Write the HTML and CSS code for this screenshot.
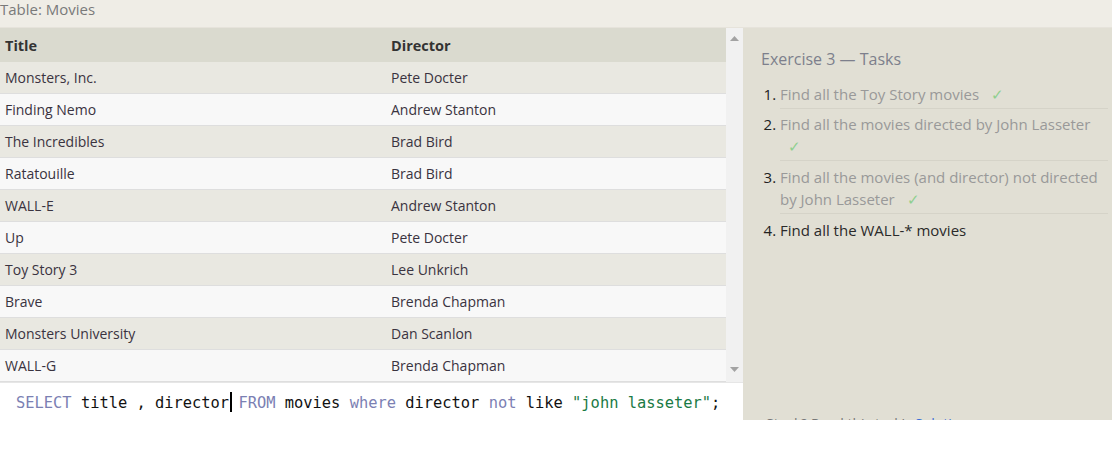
FILE: index.html
```html
<!DOCTYPE html>
<html>
<head>
<meta charset="utf-8">
<link rel="stylesheet" href="styles.css">
</head>
<body>
<div class="topbar">Table: Movies</div>
<div class="main">
  <div class="left">
    <div class="tablewrap">
      <div class="table">
        <div class="row head"><div class="c1">Title</div><div class="c2">Director</div></div>
        <div class="row odd"><div class="c1">Monsters, Inc.</div><div class="c2">Pete Docter</div></div>
        <div class="row even"><div class="c1">Finding Nemo</div><div class="c2">Andrew Stanton</div></div>
        <div class="row odd"><div class="c1">The Incredibles</div><div class="c2">Brad Bird</div></div>
        <div class="row even"><div class="c1">Ratatouille</div><div class="c2">Brad Bird</div></div>
        <div class="row odd"><div class="c1">WALL-E</div><div class="c2">Andrew Stanton</div></div>
        <div class="row even"><div class="c1">Up</div><div class="c2">Pete Docter</div></div>
        <div class="row odd"><div class="c1">Toy Story 3</div><div class="c2">Lee Unkrich</div></div>
        <div class="row even"><div class="c1">Brave</div><div class="c2">Brenda Chapman</div></div>
        <div class="row odd"><div class="c1">Monsters University</div><div class="c2">Dan Scanlon</div></div>
        <div class="row even"><div class="c1">WALL-G</div><div class="c2">Brenda Chapman</div></div>
      </div>
      <div class="scrollbar">
        <svg class="arrow" width="9" height="5" viewBox="0 0 9 5"><polygon points="0,5 9,5 4.5,0" fill="#a3a3a3"/></svg>
        <svg class="arrow" width="9" height="5" viewBox="0 0 9 5"><polygon points="0,0 9,0 4.5,5" fill="#a3a3a3"/></svg>
      </div>
    </div>
    <div class="editor"><span class="kw">SELECT</span> title , director<span class="cursor"></span> <span class="kw">FROM</span> movies <span class="kw">where</span> director <span class="kw">not</span> like <span class="str">"john lasseter"</span>;</div>
  </div>
  <div class="panel">
    <div class="ptitle">Exercise 3 — Tasks</div>
    <ol class="tasks">
      <li class="done">Find all the Toy Story movies <span class="check">✓</span></li>
      <li class="done">Find all the movies directed by John Lasseter <span class="check">✓</span></li>
      <li class="done">Find all the movies (and director) not directed by John Lasseter <span class="check">✓</span></li>
      <li class="current">Find all the WALL-* movies</li>
    </ol>
    <div class="stuck">Stuck? Read this task's <span class="link">Solution</span></div>
  </div>
</div>
</body>
</html>
```
FILE: styles.css
```css
* { box-sizing: border-box; }
body {
  margin: 0;
  background: #ffffff;
  font-family: "Open Sans", "Noto Sans", sans-serif;
  width: 1112px;
  height: 460px;
  overflow: hidden;
}
.topbar {
  height: 28px;
  background: #efede6;
  border-bottom: 1px solid #e6e3db;
  color: #7a7a7a;
  font-size: 15px;
  line-height: 18px;
}
.main {
  display: flex;
  align-items: flex-start;
}
.left {
  width: 743px;
  display: flex;
  flex-direction: column;
}
.tablewrap {
  display: flex;
  height: 355px;
  border-bottom: 1px solid #e6e6e6;
}
.table {
  width: 726px;
}
.row {
  display: flex;
  height: 32px;
  align-items: center;
  border-bottom: 1px solid #dedede;
  font-size: 14px;
  color: #3a3340;
}
.row.head {
  height: 34px;
  background: #dadacf;
  font-weight: 700;
  color: #333;
  border-bottom: none;
  font-size: 14.5px;
}
.row.odd { background: #e9e8e1; }
.row.even { background: #f8f8f8; }
.c1 { width: 386px; padding-left: 5px; }
.c2 { flex: 1; padding-left: 5px; }
.scrollbar {
  width: 17px;
  background: #f1f1f1;
  display: flex;
  flex-direction: column;
  justify-content: space-between;
  align-items: center;
  padding: 8px 0 10px;
}
.arrow { display: block; }
.editor {
  padding: 9px 16px;
  font-family: "DejaVu Sans Mono", "Liberation Mono", monospace;
  font-size: 15.4px;
  line-height: 20px;
  color: #111;
  white-space: pre;
}
.kw { color: #7b80b3; }
.str { color: #1a7a45; }
.cursor {
  display: inline-block;
  width: 2px;
  height: 20px;
  background: #000;
  vertical-align: -4px;
  margin-left: 1px;
  margin-right: -3px;
}
.panel {
  width: 369px;
  height: 392px;
  background: #e1dfd4;
  overflow: hidden;
  padding: 20px 4px 0 18px;
}
.ptitle {
  font-size: 16px;
  line-height: 22px;
  color: #7d7f8c;
  margin-bottom: 9px;
}
.tasks {
  margin: 0;
  padding-left: 19px;
  font-size: 15px;
  line-height: 22px;
}
.tasks li {
  padding: 4px 0 3px 0;
  border-bottom: 1px solid #d5d3c8;
  color: #333;
}
.tasks li:nth-child(3) { padding-top: 5px; }
.tasks li::marker { color: #222; }
.tasks li.done { color: #999; }
.tasks li.current { border-bottom: none; color: #2a2a2a; padding-top: 5px; }
.check {
  color: #8fcf8f;
  margin-left: 8px;
}
.stuck {
  margin-top: 170px;
  padding-left: 5px;
  font-size: 14px;
  color: #777;
}
.link { color: #3a6fd8; }
```
